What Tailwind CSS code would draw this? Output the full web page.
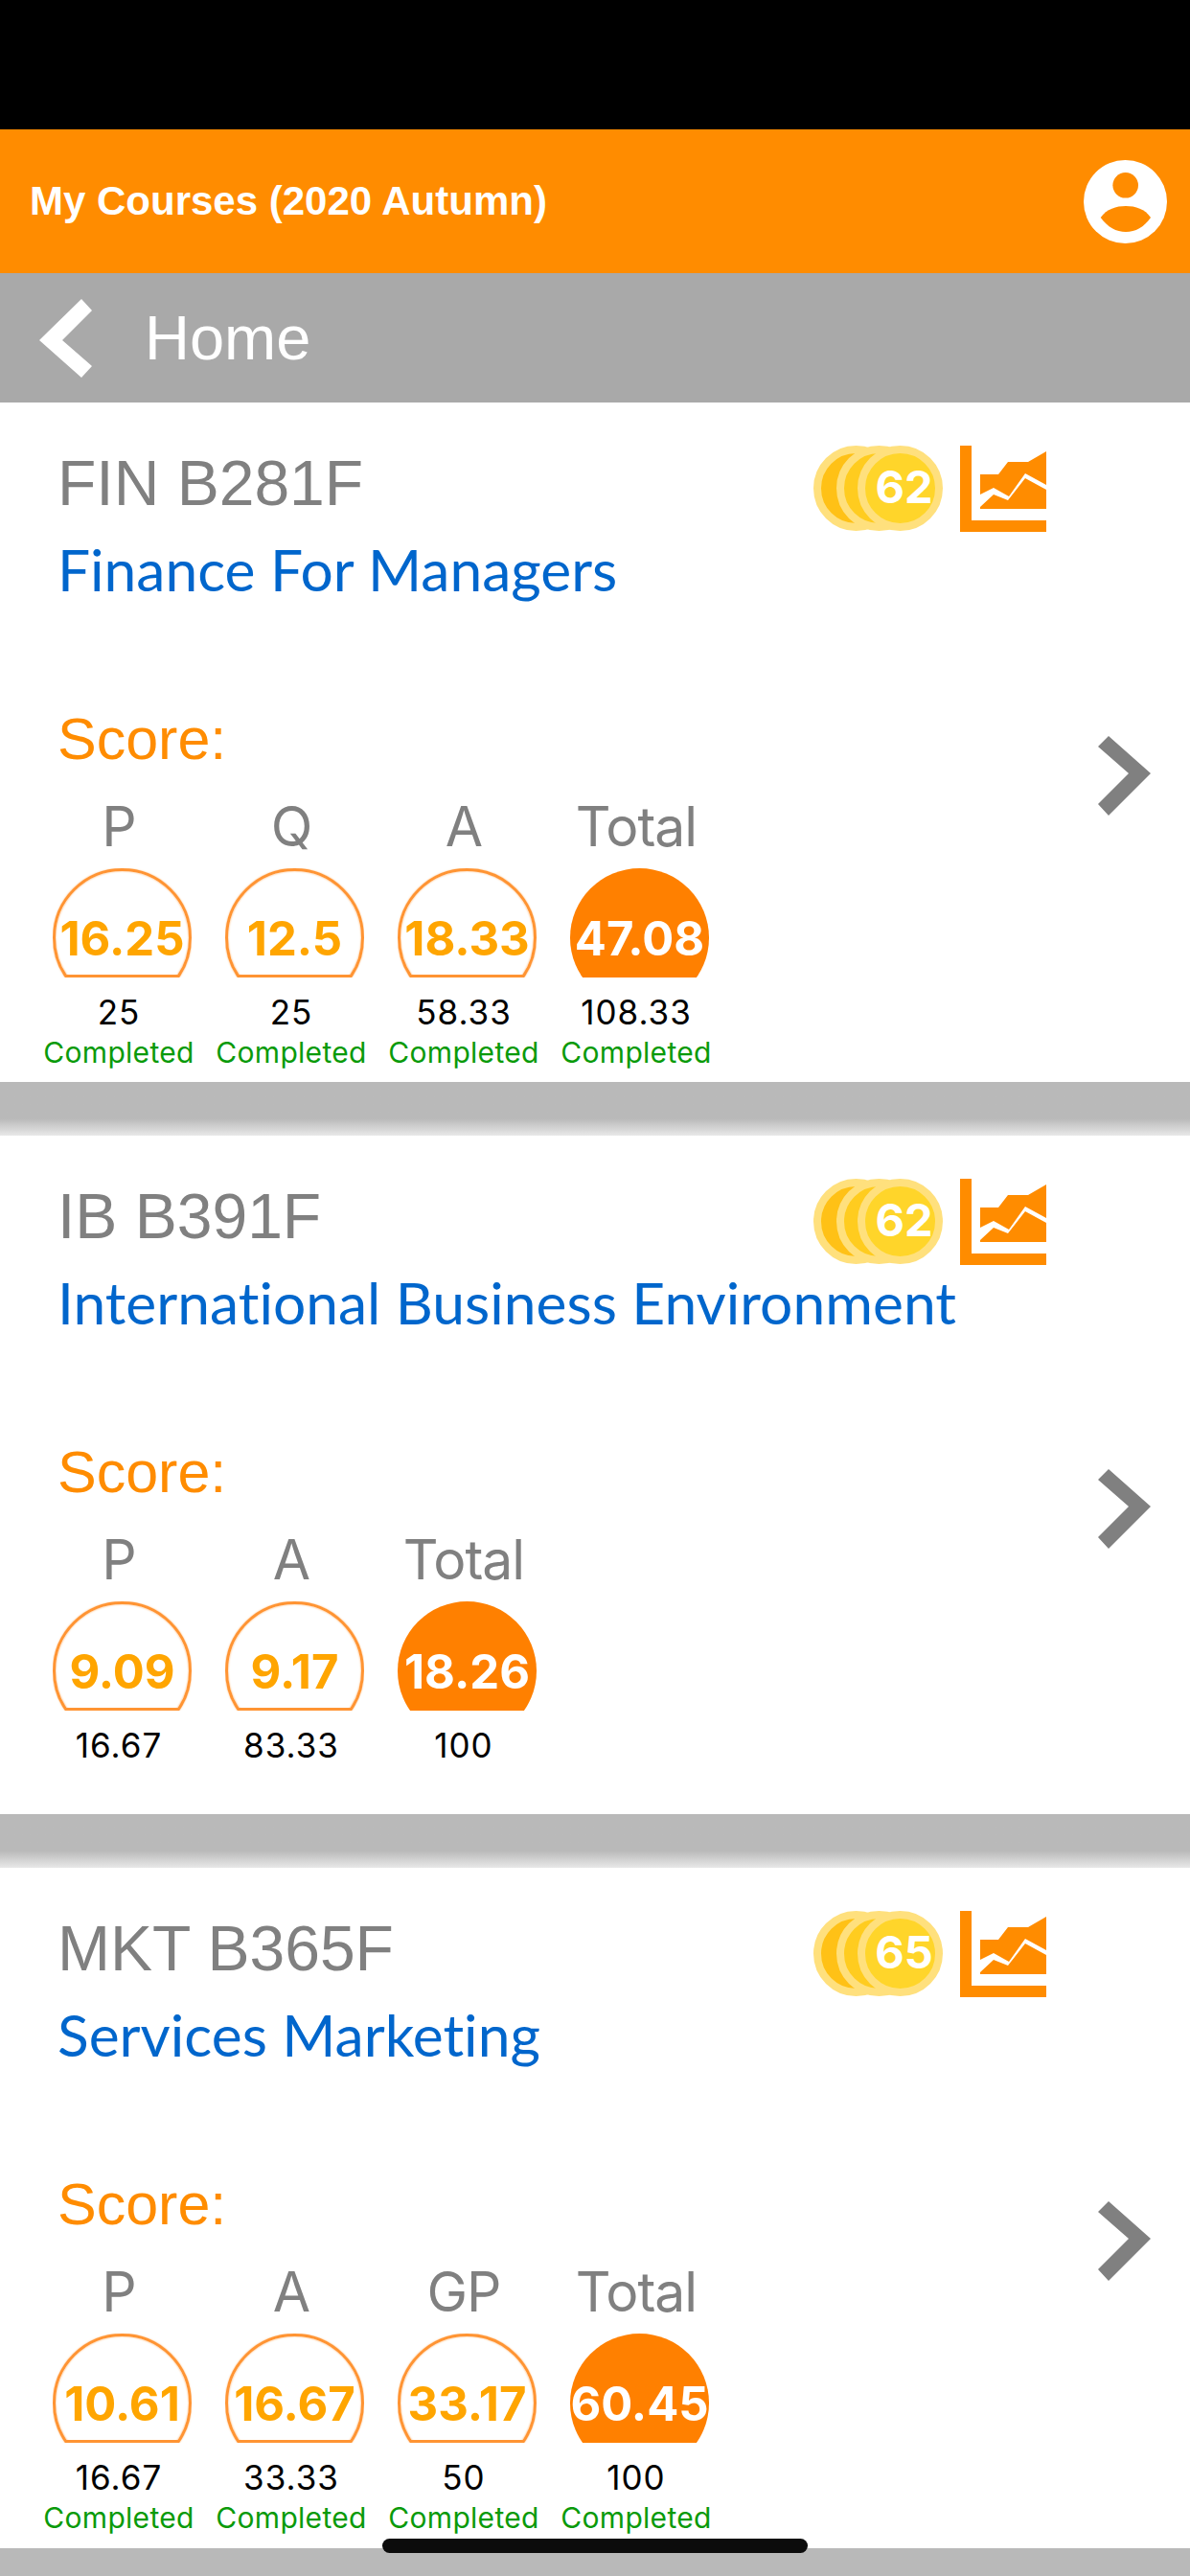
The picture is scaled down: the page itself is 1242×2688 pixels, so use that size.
<!DOCTYPE html>
<html lang="en">
<head>
  <meta charset="UTF-8" />
  <title>My Courses</title>
  <script src="https://cdn.jsdelivr.net/npm/@tailwindcss/browser@4"></script>
</head>
<body class="relative w-[1242px] h-[2688px] overflow-hidden bg-white font-['Liberation_Sans',sans-serif]">
  <div class="h-[135px] bg-black"></div>

  <!-- top bar -->
  <div class="h-[150px] bg-[#ff8c00] flex items-center justify-between pl-[31px] pr-[24px]">
    <h1 class="text-[42px] leading-[48px] font-bold text-white">My Courses (2020 Autumn)</h1>
    <svg class="w-[87px] h-[87px]" viewBox="0 0 87 87">
      <circle cx="43.5" cy="43.5" r="43.5" fill="#fff" />
      <circle cx="43.7" cy="26.3" r="13.3" fill="#ff8c00" />
      <path d="M17.7 60C24 51 34 48 44 48C54 48 64 51 70 60C63 70 54 75 44 75C34 75 25 70 17.7 60Z" fill="#ff8c00" />
    </svg>
  </div>

  <!-- back bar -->
  <div class="h-[135px] bg-[#a9a9a9] flex items-center pl-[41px] gap-[55px]">
    <svg class="w-[55px] h-[82px]" viewBox="0 0 55 82"><path d="M44 0L55 12L24 43L55 70L44 82L0 43Z" fill="#fff" /></svg>
    <span class="text-[65px] leading-[80px] text-white">Home</span>
  </div>

  <!-- FIN B281F -->
  <section class="h-[709px] flex bg-white">
    <div class="w-[1146px] pl-[60px] pt-[45px]">
      <div class="flex justify-between pr-[54px]">
        <h2 class="-mt-px text-[66px] leading-[80px] text-[#808080]">FIN B281F</h2>
        <div class="flex items-start gap-[18px]">
          <div class="flex h-[89px] w-[135px]">
            <div class="w-[89px] h-[89px] shrink-0 rounded-full border-[8px] border-[#ffe07d] bg-[#ffc116]"></div>
            <div class="w-[89px] h-[89px] shrink-0 -ml-[65px] rounded-full border-[8px] border-[#ffe07d] bg-[#ffcc1f]"></div>
            <div class="w-[89px] h-[89px] shrink-0 -ml-[67px] pl-[8px] pb-[3px] rounded-full border-[8px] border-[#ffe07d] bg-[#ffd52a] flex items-center justify-center font-['Inter',sans-serif] font-bold text-[47px] text-white">62</div>
          </div>
          <svg class="w-[90px] h-[90px]" viewBox="0 0 90 90">
            <path d="M0 0H12V78H90V90H0Z" fill="#ff8c00" />
            <path d="M21 30H40L50 17H71L90 6V41L68 29L51 53L35 44L21 51ZM21 64L35 51L50 57L68 34L90 46V66H21Z" fill="#ff8c00" />
          </svg>
        </div>
      </div>
      <p class="mt-[4px] text-[60.5px] leading-[70px] font-['Lato',sans-serif] [font-variant-ligatures:none] text-[#0066cc]">Finance For Managers</p>
      <p class="mt-[107px] text-[61px] leading-[70px] text-[#ff8c00]">Score:</p>
      <div class="flex -ml-[26px] mt-[27px] font-['Inter',sans-serif] text-center">
        <div class="w-[180px] flex flex-col items-center">
          <div class="text-[57px] leading-[60px] tracking-[-1px] text-[#808080]">P</div>
          <div class="relative mt-[13px] ml-[7px] w-[145px] h-[114px] overflow-hidden">
            <div class="w-[145px] h-[145px] pt-[2px] rounded-full border-[3px] border-[#ff9433] shadow-[0_0_2px_#ffb066,inset_0_0_2px_#ffb066] flex items-center justify-center font-bold text-[49px] text-[#ffa500]">16.25</div>
            <div class="absolute bottom-0 left-[13px] right-[13px] h-[3px] bg-[#ff9433]"></div>
          </div>
          <div class="mt-[16px] text-[35px] leading-[40px] tracking-[1px] text-black">25</div>
          <div class="mt-[4px] text-[30px] leading-[36px] tracking-[0.3px] text-[#0a9a0a]">Completed</div>
        </div>
        <div class="w-[180px] flex flex-col items-center">
          <div class="text-[57px] leading-[60px] tracking-[-1px] text-[#808080]">Q</div>
          <div class="relative mt-[13px] ml-[7px] w-[145px] h-[114px] overflow-hidden">
            <div class="w-[145px] h-[145px] pt-[2px] rounded-full border-[3px] border-[#ff9433] shadow-[0_0_2px_#ffb066,inset_0_0_2px_#ffb066] flex items-center justify-center font-bold text-[49px] text-[#ffa500]">12.5</div>
            <div class="absolute bottom-0 left-[13px] right-[13px] h-[3px] bg-[#ff9433]"></div>
          </div>
          <div class="mt-[16px] text-[35px] leading-[40px] tracking-[1px] text-black">25</div>
          <div class="mt-[4px] text-[30px] leading-[36px] tracking-[0.3px] text-[#0a9a0a]">Completed</div>
        </div>
        <div class="w-[180px] flex flex-col items-center">
          <div class="text-[57px] leading-[60px] tracking-[-1px] text-[#808080]">A</div>
          <div class="relative mt-[13px] ml-[7px] w-[145px] h-[114px] overflow-hidden">
            <div class="w-[145px] h-[145px] pt-[2px] rounded-full border-[3px] border-[#ff9433] shadow-[0_0_2px_#ffb066,inset_0_0_2px_#ffb066] flex items-center justify-center font-bold text-[49px] text-[#ffa500]">18.33</div>
            <div class="absolute bottom-0 left-[13px] right-[13px] h-[3px] bg-[#ff9433]"></div>
          </div>
          <div class="mt-[16px] text-[35px] leading-[40px] tracking-[1px] text-black">58.33</div>
          <div class="mt-[4px] text-[30px] leading-[36px] tracking-[0.3px] text-[#0a9a0a]">Completed</div>
        </div>
        <div class="w-[180px] flex flex-col items-center">
          <div class="text-[57px] leading-[60px] tracking-[-1px] text-[#808080]">Total</div>
          <div class="mt-[13px] ml-[7px] w-[145px] h-[114px] overflow-hidden">
            <div class="w-[145px] h-[145px] pt-[2px] rounded-full bg-[#ff8000] flex items-center justify-center font-bold text-[49px] text-white">47.08</div>
          </div>
          <div class="mt-[16px] text-[35px] leading-[40px] tracking-[1px] text-black">108.33</div>
          <div class="mt-[4px] text-[30px] leading-[36px] tracking-[0.3px] text-[#0a9a0a]">Completed</div>
        </div>
      </div>
    </div>
    <div class="pt-[348px]">
      <svg class="w-[55px] h-[83px]" viewBox="0 0 55 83"><path d="M11 0L55 39L11 83L0 71L32 39L0 11Z" fill="#808080" /></svg>
    </div>
  </section>
  <div class="h-[56px] bg-linear-to-b from-[#b9b9b9] from-[68%] to-[#e8e8e8]"></div>

  <!-- IB B391F -->
  <section class="h-[708px] flex bg-white">
    <div class="w-[1146px] pl-[60px] pt-[45px]">
      <div class="flex justify-between pr-[54px]">
        <h2 class="-mt-px text-[66px] leading-[80px] text-[#808080]">IB B391F</h2>
        <div class="flex items-start gap-[18px]">
          <div class="flex h-[89px] w-[135px]">
            <div class="w-[89px] h-[89px] shrink-0 rounded-full border-[8px] border-[#ffe07d] bg-[#ffc116]"></div>
            <div class="w-[89px] h-[89px] shrink-0 -ml-[65px] rounded-full border-[8px] border-[#ffe07d] bg-[#ffcc1f]"></div>
            <div class="w-[89px] h-[89px] shrink-0 -ml-[67px] pl-[8px] pb-[3px] rounded-full border-[8px] border-[#ffe07d] bg-[#ffd52a] flex items-center justify-center font-['Inter',sans-serif] font-bold text-[47px] text-white">62</div>
          </div>
          <svg class="w-[90px] h-[90px]" viewBox="0 0 90 90">
            <path d="M0 0H12V78H90V90H0Z" fill="#ff8c00" />
            <path d="M21 30H40L50 17H71L90 6V41L68 29L51 53L35 44L21 51ZM21 64L35 51L50 57L68 34L90 46V66H21Z" fill="#ff8c00" />
          </svg>
        </div>
      </div>
      <p class="mt-[4px] text-[60.5px] leading-[70px] font-['Lato',sans-serif] [font-variant-ligatures:none] text-[#0066cc]">International Business Environment</p>
      <p class="mt-[107px] text-[61px] leading-[70px] text-[#ff8c00]">Score:</p>
      <div class="flex -ml-[26px] mt-[27px] font-['Inter',sans-serif] text-center">
        <div class="w-[180px] flex flex-col items-center">
          <div class="text-[57px] leading-[60px] tracking-[-1px] text-[#808080]">P</div>
          <div class="relative mt-[13px] ml-[7px] w-[145px] h-[114px] overflow-hidden">
            <div class="w-[145px] h-[145px] pt-[2px] rounded-full border-[3px] border-[#ff9433] shadow-[0_0_2px_#ffb066,inset_0_0_2px_#ffb066] flex items-center justify-center font-bold text-[49px] text-[#ffa500]">9.09</div>
            <div class="absolute bottom-0 left-[13px] right-[13px] h-[3px] bg-[#ff9433]"></div>
          </div>
          <div class="mt-[16px] text-[35px] leading-[40px] tracking-[1px] text-black">16.67</div>
        </div>
        <div class="w-[180px] flex flex-col items-center">
          <div class="text-[57px] leading-[60px] tracking-[-1px] text-[#808080]">A</div>
          <div class="relative mt-[13px] ml-[7px] w-[145px] h-[114px] overflow-hidden">
            <div class="w-[145px] h-[145px] pt-[2px] rounded-full border-[3px] border-[#ff9433] shadow-[0_0_2px_#ffb066,inset_0_0_2px_#ffb066] flex items-center justify-center font-bold text-[49px] text-[#ffa500]">9.17</div>
            <div class="absolute bottom-0 left-[13px] right-[13px] h-[3px] bg-[#ff9433]"></div>
          </div>
          <div class="mt-[16px] text-[35px] leading-[40px] tracking-[1px] text-black">83.33</div>
        </div>
        <div class="w-[180px] flex flex-col items-center">
          <div class="text-[57px] leading-[60px] tracking-[-1px] text-[#808080]">Total</div>
          <div class="mt-[13px] ml-[7px] w-[145px] h-[114px] overflow-hidden">
            <div class="w-[145px] h-[145px] pt-[2px] rounded-full bg-[#ff8000] flex items-center justify-center font-bold text-[49px] text-white">18.26</div>
          </div>
          <div class="mt-[16px] text-[35px] leading-[40px] tracking-[1px] text-black">100</div>
        </div>
      </div>
    </div>
    <div class="pt-[348px]">
      <svg class="w-[55px] h-[83px]" viewBox="0 0 55 83"><path d="M11 0L55 39L11 83L0 71L32 39L0 11Z" fill="#808080" /></svg>
    </div>
  </section>
  <div class="h-[56px] bg-linear-to-b from-[#b9b9b9] from-[68%] to-[#e8e8e8]"></div>

  <!-- MKT B365F -->
  <section class="h-[710px] flex bg-white">
    <div class="w-[1146px] pl-[60px] pt-[45px]">
      <div class="flex justify-between pr-[54px]">
        <h2 class="-mt-px text-[66px] leading-[80px] text-[#808080]">MKT B365F</h2>
        <div class="flex items-start gap-[18px]">
          <div class="flex h-[89px] w-[135px]">
            <div class="w-[89px] h-[89px] shrink-0 rounded-full border-[8px] border-[#ffe07d] bg-[#ffc116]"></div>
            <div class="w-[89px] h-[89px] shrink-0 -ml-[65px] rounded-full border-[8px] border-[#ffe07d] bg-[#ffcc1f]"></div>
            <div class="w-[89px] h-[89px] shrink-0 -ml-[67px] pl-[8px] pb-[3px] rounded-full border-[8px] border-[#ffe07d] bg-[#ffd52a] flex items-center justify-center font-['Inter',sans-serif] font-bold text-[47px] text-white">65</div>
          </div>
          <svg class="w-[90px] h-[90px]" viewBox="0 0 90 90">
            <path d="M0 0H12V78H90V90H0Z" fill="#ff8c00" />
            <path d="M21 30H40L50 17H71L90 6V41L68 29L51 53L35 44L21 51ZM21 64L35 51L50 57L68 34L90 46V66H21Z" fill="#ff8c00" />
          </svg>
        </div>
      </div>
      <p class="mt-[4px] text-[60.5px] leading-[70px] font-['Lato',sans-serif] [font-variant-ligatures:none] text-[#0066cc]">Services Marketing</p>
      <p class="mt-[107px] text-[61px] leading-[70px] text-[#ff8c00]">Score:</p>
      <div class="flex -ml-[26px] mt-[27px] font-['Inter',sans-serif] text-center">
        <div class="w-[180px] flex flex-col items-center">
          <div class="text-[57px] leading-[60px] tracking-[-1px] text-[#808080]">P</div>
          <div class="relative mt-[13px] ml-[7px] w-[145px] h-[114px] overflow-hidden">
            <div class="w-[145px] h-[145px] pt-[2px] rounded-full border-[3px] border-[#ff9433] shadow-[0_0_2px_#ffb066,inset_0_0_2px_#ffb066] flex items-center justify-center font-bold text-[49px] text-[#ffa500]">10.61</div>
            <div class="absolute bottom-0 left-[13px] right-[13px] h-[3px] bg-[#ff9433]"></div>
          </div>
          <div class="mt-[16px] text-[35px] leading-[40px] tracking-[1px] text-black">16.67</div>
          <div class="mt-[4px] text-[30px] leading-[36px] tracking-[0.3px] text-[#0a9a0a]">Completed</div>
        </div>
        <div class="w-[180px] flex flex-col items-center">
          <div class="text-[57px] leading-[60px] tracking-[-1px] text-[#808080]">A</div>
          <div class="relative mt-[13px] ml-[7px] w-[145px] h-[114px] overflow-hidden">
            <div class="w-[145px] h-[145px] pt-[2px] rounded-full border-[3px] border-[#ff9433] shadow-[0_0_2px_#ffb066,inset_0_0_2px_#ffb066] flex items-center justify-center font-bold text-[49px] text-[#ffa500]">16.67</div>
            <div class="absolute bottom-0 left-[13px] right-[13px] h-[3px] bg-[#ff9433]"></div>
          </div>
          <div class="mt-[16px] text-[35px] leading-[40px] tracking-[1px] text-black">33.33</div>
          <div class="mt-[4px] text-[30px] leading-[36px] tracking-[0.3px] text-[#0a9a0a]">Completed</div>
        </div>
        <div class="w-[180px] flex flex-col items-center">
          <div class="text-[57px] leading-[60px] tracking-[-1px] text-[#808080]">GP</div>
          <div class="relative mt-[13px] ml-[7px] w-[145px] h-[114px] overflow-hidden">
            <div class="w-[145px] h-[145px] pt-[2px] rounded-full border-[3px] border-[#ff9433] shadow-[0_0_2px_#ffb066,inset_0_0_2px_#ffb066] flex items-center justify-center font-bold text-[49px] text-[#ffa500]">33.17</div>
            <div class="absolute bottom-0 left-[13px] right-[13px] h-[3px] bg-[#ff9433]"></div>
          </div>
          <div class="mt-[16px] text-[35px] leading-[40px] tracking-[1px] text-black">50</div>
          <div class="mt-[4px] text-[30px] leading-[36px] tracking-[0.3px] text-[#0a9a0a]">Completed</div>
        </div>
        <div class="w-[180px] flex flex-col items-center">
          <div class="text-[57px] leading-[60px] tracking-[-1px] text-[#808080]">Total</div>
          <div class="mt-[13px] ml-[7px] w-[145px] h-[114px] overflow-hidden">
            <div class="w-[145px] h-[145px] pt-[2px] rounded-full bg-[#ff8000] flex items-center justify-center font-bold text-[49px] text-white">60.45</div>
          </div>
          <div class="mt-[16px] text-[35px] leading-[40px] tracking-[1px] text-black">100</div>
          <div class="mt-[4px] text-[30px] leading-[36px] tracking-[0.3px] text-[#0a9a0a]">Completed</div>
        </div>
      </div>
    </div>
    <div class="pt-[348px]">
      <svg class="w-[55px] h-[83px]" viewBox="0 0 55 83"><path d="M11 0L55 39L11 83L0 71L32 39L0 11Z" fill="#808080" /></svg>
    </div>
  </section>
  <div class="h-[30px] bg-[#b9b9b9]"></div>

  <!-- home indicator -->
  <div class="absolute left-[399px] top-[2649px] w-[444px] h-[15px] rounded-[8px] bg-[#0c0c0c]"></div>
</body>
</html>
